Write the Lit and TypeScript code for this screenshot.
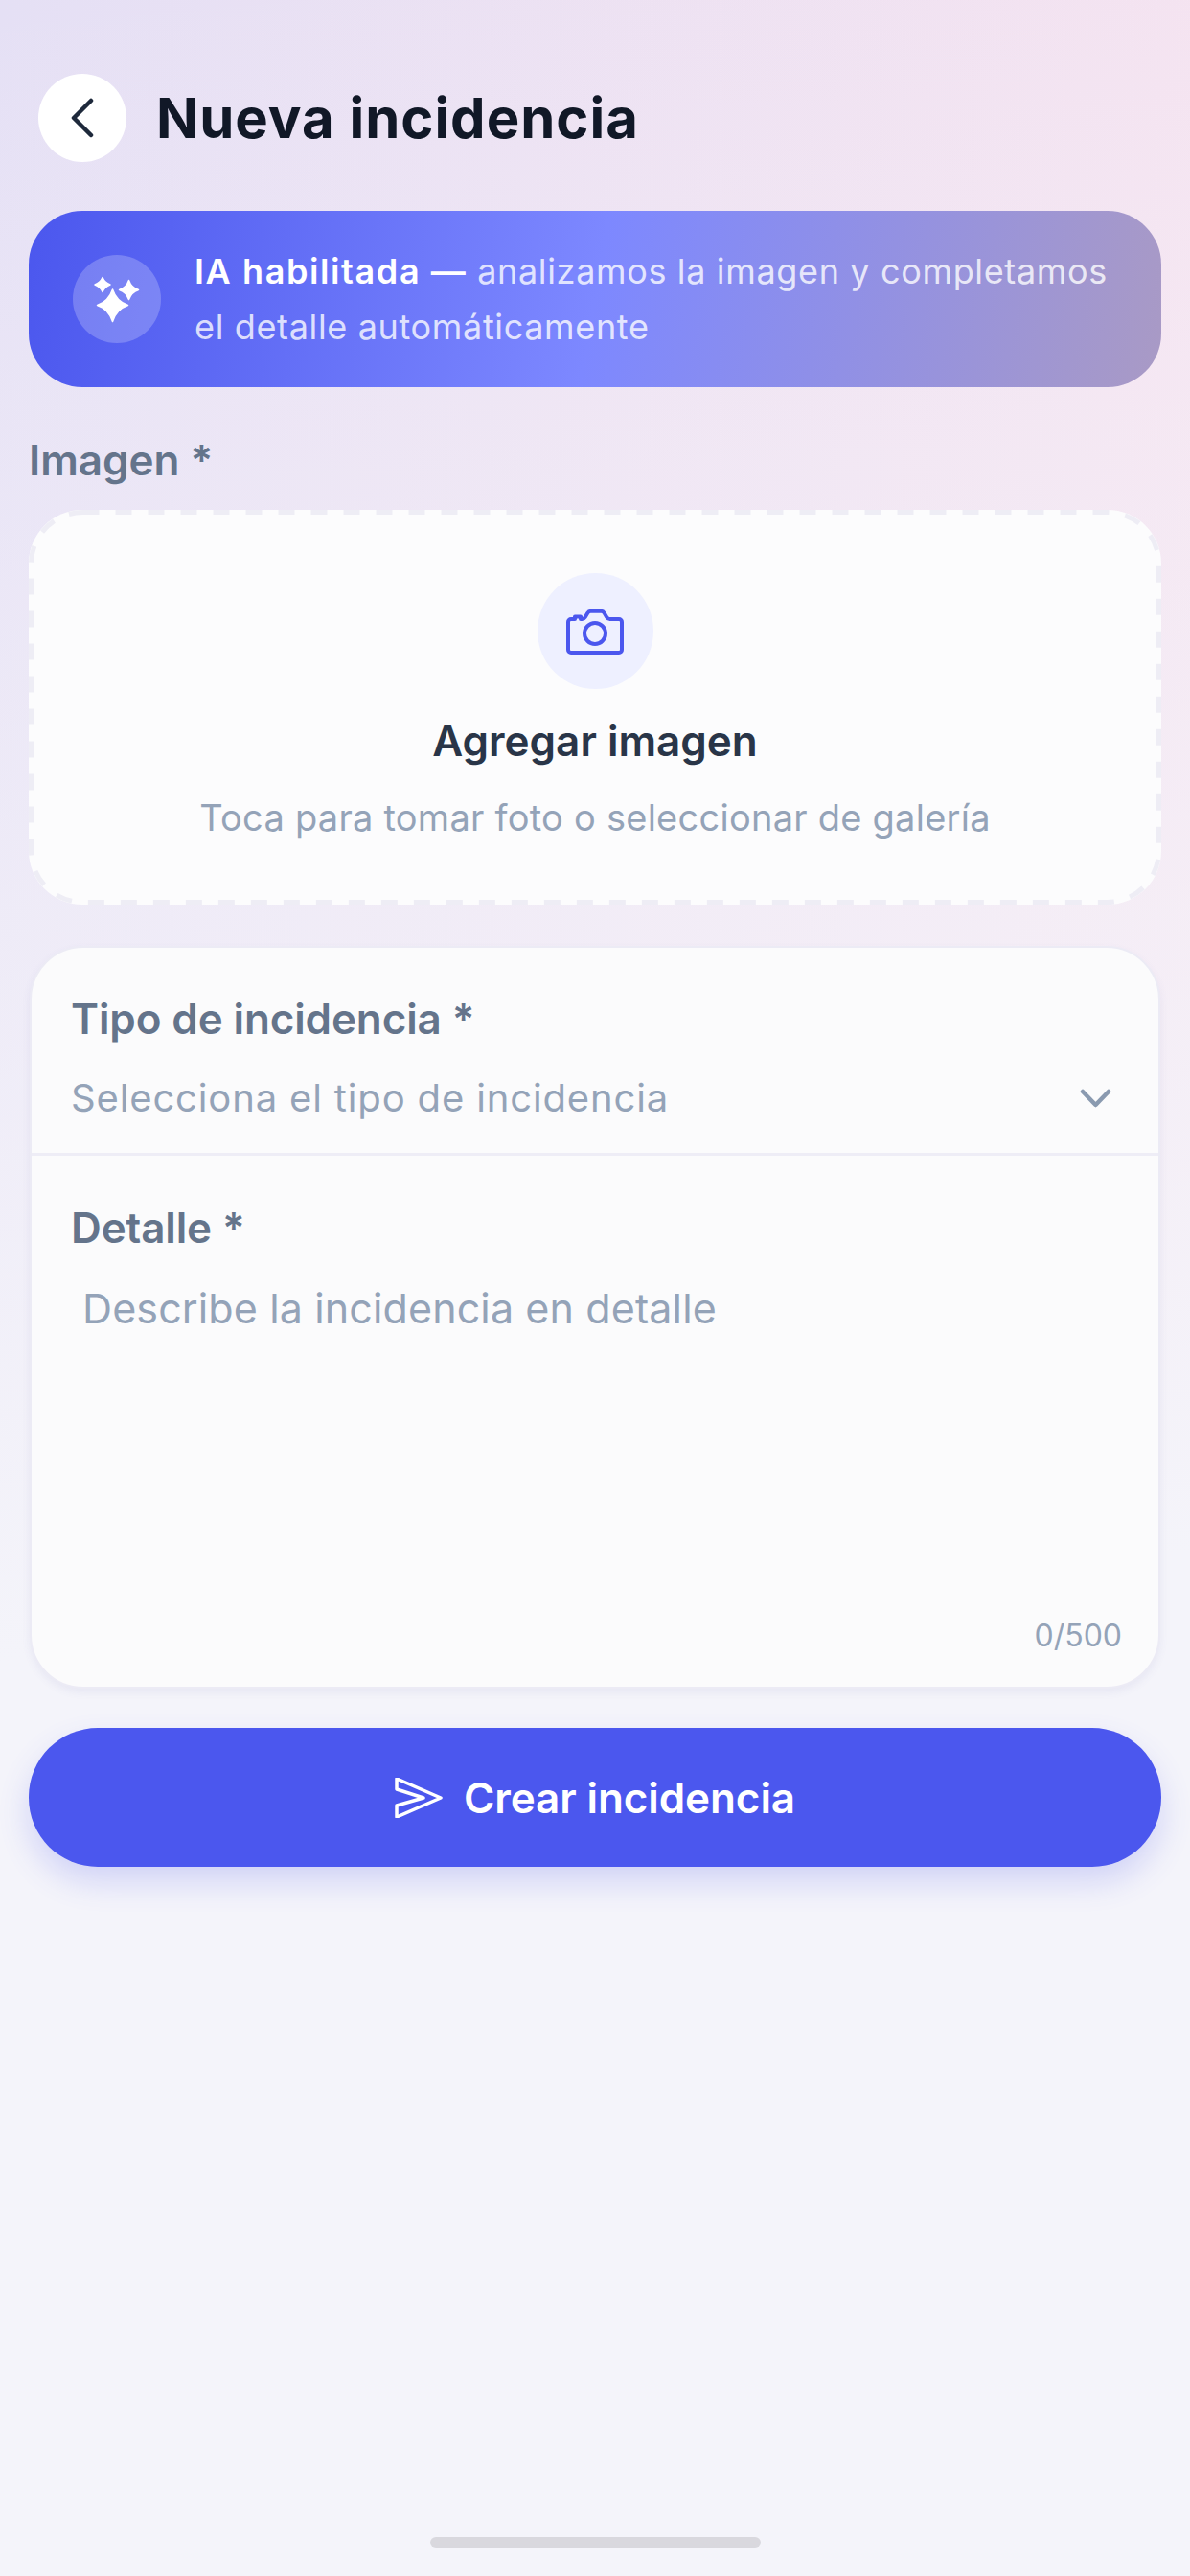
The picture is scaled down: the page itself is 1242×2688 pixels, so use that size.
import { LitElement, html, css } from "lit";
import { customElement } from "lit/decorators.js";

@customElement("app-root")
export class AppRoot extends LitElement {
  static styles = css`
    :host {
      display: flex;
      flex-direction: column;
      min-height: 2688px;
      width: 1242px;
      box-sizing: border-box;
      padding: 77px 30px 29px;
      background:
        linear-gradient(175deg, rgba(244, 244, 250, 0) 0%, rgba(244, 244, 250, 1) 62%),
        linear-gradient(100deg, #e5e0f5 0%, #fae3ee 100%);
      font-family: Inter, "Liberation Sans", sans-serif;
    }
    .header { display: flex; align-items: center; gap: 31px; padding-left: 10px; height: 92px; }
    .back {
      width: 92px; height: 92px; border-radius: 50%; background: #fff;
      display: flex; align-items: center; justify-content: center; flex: none;
    }
    .title { font-size: 58px; font-weight: 700; color: #111827; letter-spacing: 1px; line-height: 92px; }
    .banner {
      margin-top: 51px; height: 184px; border-radius: 56px; box-sizing: border-box;
      padding: 0 30px 0 46px; display: flex; align-items: center; gap: 35px;
      background: linear-gradient(100deg, #4b57ee 0%, #7d88ff 50%, #a99ac5 100%);
    }
    .spark {
      width: 92px; height: 92px; border-radius: 50%; background: rgba(255, 255, 255, 0.22);
      display: flex; align-items: center; justify-content: center; flex: none;
    }
    .banner-text { font-size: 36px; line-height: 58px; color: rgba(255, 255, 255, 0.8); letter-spacing: 0.65px; white-space: nowrap; }
    .banner-text b { color: #fff; font-weight: 600; letter-spacing: 1.6px; }
    .label { font-size: 44px; line-height: 50px; font-weight: 600; color: #64748b; }
    .card .label { letter-spacing: -0.12px; }
    .image-label { margin-top: 51px; }
    .drop {
      position: relative; margin-top: 27px; height: 412px; border-radius: 56px; background: #fcfcfd;
      box-sizing: border-box; padding-top: 66px; display: flex; flex-direction: column; align-items: center;
    }
    .dash { position: absolute; inset: 0; width: 100%; height: 100%; overflow: visible; }
    .dash rect { fill: none; stroke: #eeedf5; stroke-width: 5; stroke-dasharray: 17 17; }
    .cam {
      width: 121px; height: 121px; border-radius: 50%; background: #eef0ff;
      display: flex; align-items: center; justify-content: center;
    }
    .drop-title { margin-top: 29px; font-size: 44px; line-height: 50px; font-weight: 600; color: #293548; }
    .drop-sub { margin-top: 30px; font-size: 38px; line-height: 50px; color: #94a3b8; letter-spacing: 0.25px; }
    .card {
      margin: 43px 1px 0; height: 775px; box-sizing: border-box; border: 2px solid #ecebf5; border-radius: 56px;
      background: #fbfbfc; box-shadow: 0 4px 8px rgba(90, 90, 160, 0.08);
      display: flex; flex-direction: column;
    }
    .select { height: 217px; box-sizing: border-box; padding: 49px 41px 0; border-bottom: 3px solid #eeedf6; }
    .value-row { margin-top: 33px; display: flex; align-items: center; justify-content: space-between; }
    .placeholder { font-size: 40px; line-height: 50px; color: #94a3b8; letter-spacing: 0.85px; }
    .chev { margin-right: 8px; display: block; }
    .detail { flex: 1; padding: 50px 41px 0; display: flex; flex-direction: column; }
    .area { margin-top: 34px; padding-left: 12px; flex: 1; }
    .describe { font-size: 43px; line-height: 50px; color: #94a3b8; letter-spacing: 0.12px; }
    .count { text-align: right; font-size: 32px; line-height: 40px; color: #94a3b8; padding-bottom: 33px; margin-right: -3px; }
    .button {
      margin-top: 41px; height: 145px; border-radius: 72px; background: #4b57ee;
      box-shadow: 0 16px 32px rgba(75, 87, 238, 0.2);
      display: flex; align-items: center; justify-content: center; gap: 22px;
      color: #fff; font-size: 44px; font-weight: 600; letter-spacing: -0.1px;
    }
    .home {
      margin: auto auto 0; width: 345px; height: 12px; border-radius: 6px; background: #d9d8de;
    }
  `;

  render() {
    return html`
      <div class="header">
        <div class="back">
          <svg width="24" height="42" viewBox="0 0 24 42" fill="none" stroke="#1e293b" stroke-width="4.5" stroke-linecap="round" stroke-linejoin="round"><path d="M21 3 3 21l18 18"/></svg>
        </div>
        <div class="title">Nueva incidencia</div>
      </div>
      <div class="banner">
        <div class="spark">
          <svg width="50" height="50" viewBox="0 0 50 50" fill="#fff" stroke="#fff" stroke-width="1.500" stroke-linejoin="round">
            <path d="M20.500 15Q24.500 27.500 36.500 31.500Q24.500 35.500 20.500 48.500Q16.500 35.500 4.500 31.500Q16.500 27.500 20.500 15Z"/>
            <path d="M10 2.500Q12.300 7.700 18 10Q12.300 12.300 10 17.500Q7.700 12.300 2 10Q7.700 7.700 10 2.500Z"/>
            <path d="M37.500 5.500Q40 13 47.500 15.500Q40 18 37.500 25.500Q35 18 27.500 15.500Q35 13 37.500 5.500Z"/>
          </svg>
        </div>
        <div class="banner-text"><b>IA habilitada —</b> <span>analizamos la imagen y completamos</span><br />el detalle automáticamente</div>
      </div>
      <div class="label image-label">Imagen *</div>
      <div class="drop">
        <svg class="dash"><rect x="2.500" y="2.500" width="1177" height="407" rx="54" ry="54"></rect></svg>
        <div class="cam">
          <svg width="60" height="48" viewBox="0 0 60 48" fill="none" stroke="#4b57ee" stroke-width="4" stroke-linejoin="round" stroke-linecap="round">
            <path d="M2 14a3 3 0 0 1 3-3h4V8.500h6V11h1.500c1.500 0 2.500-.7 3.300-2l2.500-4.200c.7-1.200 1.700-2 3.200-2h11c1.500 0 2.500.8 3.200 2l2.500 4.200c.8 1.300 1.800 2 3.300 2H55a3 3 0 0 1 3 3v29a3 3 0 0 1-3 3H5a3 3 0 0 1-3-3z"/>
            <circle cx="30" cy="26" r="11"/>
          </svg>
        </div>
        <div class="drop-title">Agregar imagen</div>
        <div class="drop-sub">Toca para tomar foto o seleccionar de galería</div>
      </div>
      <div class="card">
        <div class="select">
          <div class="label">Tipo de incidencia *</div>
          <div class="value-row">
            <div class="placeholder">Selecciona el tipo de incidencia</div>
            <svg class="chev" width="33" height="20" viewBox="0 0 33 20" fill="none" stroke="#8a9ab0" stroke-width="4.500" stroke-linecap="round" stroke-linejoin="round"><path d="M3 3l13.500 14L30 3"/></svg>
          </div>
        </div>
        <div class="detail">
          <div class="label">Detalle *</div>
          <div class="area"><div class="describe">Describe la incidencia en detalle</div></div>
          <div class="count">0/500</div>
        </div>
      </div>
      <div class="button">
        <svg width="50" height="42" viewBox="0 0 50 42" fill="none" stroke="#fff" stroke-width="3.500" stroke-linejoin="round" stroke-linecap="round"><path d="M2 1l46 20L2 41V29l28-8L2 12z"/></svg>
        <span>Crear incidencia</span>
      </div>
      <div class="home"></div>
    `;
  }
}
